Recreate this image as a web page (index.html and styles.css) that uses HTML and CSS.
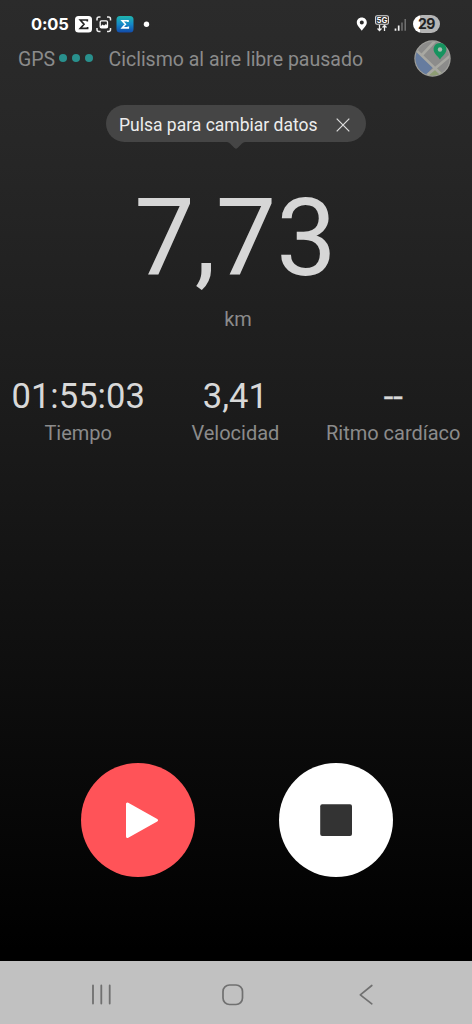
FILE: index.html
```html
<!DOCTYPE html>
<html lang="es">
<head>
<meta charset="utf-8">
<title>Ciclismo al aire libre</title>
<link rel="stylesheet" href="styles.css">
</head>
<body>
<main class="screen">
  <header class="status">
    <span class="clock">0:05</span>
    <svg class="status-apps" width="78" height="20" viewBox="0 0 78 20">
      <defs><linearGradient id="app" x1="0" y1="0" x2="0" y2="1"><stop offset="0" stop-color="#20b5ad"/><stop offset=".5" stop-color="#1589c8"/><stop offset="1" stop-color="#1249a8"/></linearGradient></defs>
      <rect x="0" y="2" width="17" height="16.500" rx="3.500" fill="#fff"/>
      <path d="M12.300 7.500V6H5.300l3.700 4.200-3.700 4.200h7.300V13" fill="none" stroke="#222" stroke-width="1.700"/>
      <path d="M22 6.500V5q0-2 2-2h1.500M32 3h1.500q2 0 2 2v1.500M35.500 14v1.500q0 2-2 2H32M25.500 17.500H24q-2 0-2-2V14" fill="none" stroke="#eee" stroke-width="1.500"/>
      <rect x="25.200" y="6.800" width="7.300" height="7" rx="1.300" fill="none" stroke="#fff" stroke-width="1.300"/>
      <path d="M25.500 12.500l2-2 1.500 1 2-1.500 1.500 2V14h-7z" fill="#fff"/>
      <rect x="41.500" y="2" width="17" height="16.500" rx="3.500" fill="url(#app)"/>
      <path d="M53 8V6.700h-5.800l3.200 3.600-3.200 3.600h6.100v-1.400" fill="none" stroke="#fff" stroke-width="1.600"/>
      <circle cx="71.500" cy="10.200" r="2.700" fill="#fff"/>
    </svg>
    <svg class="status-net" width="52" height="20" viewBox="0 0 52 20">
      <path fill-rule="evenodd" d="M5.800 3.500c-3 0-5 2.200-5 5 0 3.300 3.200 5.500 5 8.200 1.800-2.700 5-4.900 5-8.200 0-2.800-2-5-5-5zm0 3.100a2 2 0 1 1 0 4 2 2 0 0 1 0-4z" fill="#fff"/>
      <rect x="19.600" y="1.800" width="12.800" height="8.400" rx="1.500" fill="none" stroke="#ddd" stroke-width="1.100"/>
      <text x="26" y="8.700" text-anchor="middle" class="net-label">5G</text>
      <path d="M23.500 11v5.500m-2-2 2 2 2-2M28.500 17v-5.500m-2 2 2-2 2 2" fill="none" stroke="#eee" stroke-width="1.300"/>
      <path d="M39.500 14.500v2.200M42.700 11.500v5.200" stroke="#f2f2f2" stroke-width="1.700"/>
      <path d="M46 8.500v8.200M49.200 5v11.700" stroke="#777" stroke-width="1.400"/>
    </svg>
    <span class="battery">29</span>
  </header>
  <section class="activity">
    <span class="gps">GPS</span>
    <span class="signal"><i></i><i></i><i></i></span>
    <span class="state">Ciclismo al aire libre pausado</span>
    <svg class="map" width="37" height="37" viewBox="0 0 37 37">
      <defs><clipPath id="disc"><circle cx="18.500" cy="18.500" r="17"/></clipPath></defs>
      <circle cx="18.500" cy="18.500" r="18.200" fill="#a0a09c"/>
      <g clip-path="url(#disc)">
        <path d="M0 0h37v37H0z" fill="#8c8c8b"/>
        <path d="M0 9l19 18L8 40H0z" fill="#667c9f"/>
        <path d="M22 27l-10 10h20z" fill="#8e9d74"/>
        <path d="M-1 7l31 30M12 36l25-21M8 15L21 1" fill="none" stroke="#a8a8a2" stroke-width="2.600"/>
      </g>
      <path fill-rule="evenodd" d="M26 3c-3.800 0-6.400 2.900-6.400 6.300 0 4.100 3.800 6.500 6.400 10.200 2.600-3.700 6.400-6.100 6.400-10.200C32.400 5.900 29.800 3 26 3z" fill="#16935f"/>
      <circle cx="26" cy="9.500" r="2.200" fill="#a6bcb0"/>
    </svg>
  </section>
  <div class="hint">
    <span>Pulsa para cambiar datos</span>
    <svg width="14" height="14" viewBox="0 0 14 14"><path d="M.7.700l12.600 12.600M13.300.700L.7 13.300" stroke="#dedede" stroke-width="1.200"/></svg>
  </div>
  <svg class="hint-tip" width="18" height="7" viewBox="0 0 18 7"><path d="M0 0h18q-1.500 0-3 1.500L10.500 6q-1.500 1.500-3 0L3 1.500Q1.500 0 0 0z" fill="#454545"/></svg>
  <div class="distance">7,73</div>
  <div class="unit">km</div>
  <section class="stats">
    <div class="stat"><b>01:55:03</b><span>Tiempo</span></div>
    <div class="stat"><b>3,41</b><span>Velocidad</span></div>
    <div class="stat"><b class="empty">--</b><span>Ritmo cardíaco</span></div>
  </section>
  <section class="controls">
    <button class="round resume" aria-label="Reanudar"><svg width="114" height="114" viewBox="0 0 114 114"><path d="M46.500 41v32.500L75.500 57.300z" fill="#fff" stroke="#fff" stroke-width="3" stroke-linejoin="round"/></svg></button>
    <button class="round stop" aria-label="Detener"><svg width="114" height="114" viewBox="0 0 114 114"><rect x="41.200" y="41.200" width="31.800" height="31.800" rx="2" fill="#333"/></svg></button>
  </section>
  <nav class="nav">
    <svg width="22" height="22" viewBox="0 0 22 22"><path d="M2 1.500v18M10.300 1.500v18M18.700 1.500v18" stroke="#707070" stroke-width="1.800" stroke-linecap="round"/></svg>
    <svg class="home" width="22" height="22" viewBox="0 0 22 22"><rect x="1" y="1" width="19.500" height="19.500" rx="6.500" fill="none" stroke="#707070" stroke-width="1.700"/></svg>
    <svg width="16" height="22" viewBox="0 0 16 22"><path d="M13.800 1.500L2.300 10.800l11.500 9" fill="none" stroke="#707070" stroke-width="1.700" stroke-linecap="round" stroke-linejoin="round"/></svg>
  </nav>
</main>
</body>
</html>
```
FILE: styles.css
```css
* { box-sizing: border-box; }
body { margin: 0; }
svg { display: block; flex: none; }

.screen {
  display: flex;
  flex-direction: column;
  width: 472px;
  height: 1024px;
  overflow: hidden;
  background: linear-gradient(#2b2b2b 0, #272727 140px, #1c1c1c 400px, #000 950px);
  font-family: Roboto, sans-serif;
  color: #8b8b8b;
  white-space: nowrap;
}

.status { display: flex; height: 38px; padding: 14px 0 0 31px; }
.clock { width: 44px; font: 700 16.500px/20px Inter, sans-serif; letter-spacing: -.2px; color: #fff; }
.status-net { margin-left: 203px; }
.net-label { font: 700 7.800px Inter, sans-serif; fill: #fff; }
.battery {
  width: 27px;
  height: 18px;
  margin: 1px 0 0 5px;
  border-radius: 9px;
  background: linear-gradient(90deg, #fff 27%, #b5b5b5 27%);
  font: 700 14px/18px Inter, sans-serif;
  letter-spacing: -.4px;
  text-align: center;
  color: #222;
}

.activity { display: flex; align-items: center; height: 41px; padding: 0 21px 0 18px; font-size: 19.500px; }
.gps, .state { padding-top: 1px; }
.gps { width: 41px; }
.signal { display: flex; gap: 5px; width: 49.500px; margin-top: -1px; }
.signal i { width: 8px; height: 8px; border-radius: 50%; background: #29908d; }
.map { margin-left: auto; }

.hint {
  display: flex;
  align-items: center;
  justify-content: space-between;
  align-self: center;
  width: 260px;
  height: 37px;
  margin-top: 26px;
  padding: 2px 16px 0 13px;
  border-radius: 19px;
  background: #454545;
  font-size: 17.500px;
  color: #ededed;
}
.hint-tip { align-self: center; }

.distance { margin: 25px 0 0 -1px; font-size: 107.500px; line-height: 128px; text-align: center; color: #d6d6d6; }
.unit { margin: 5px 0 0 4px; font-size: 20px; line-height: 24px; text-align: center; }

.stats { display: flex; justify-content: space-between; margin-top: 45px; padding: 0 11.500px 0 11.500px; }
.stat { display: flex; flex-direction: column; align-items: center; }
.stat b { font-size: 34.600px; font-weight: 400; line-height: 41px; color: #d8d8d8; }
.stat .empty { -webkit-text-stroke: .4px #d8d8d8; }
.stat span { margin-top: 4px; font-size: 20px; line-height: 24px; }

.controls { display: flex; gap: 84px; margin: auto 0 84px 81px; }
.round { width: 114px; height: 114px; padding: 0; border: 0; border-radius: 50%; }
.resume { background: #ff5358; }
.stop { background: #fff; }

.nav {
  display: flex;
  flex: none;
  align-items: center;
  justify-content: space-between;
  height: 63px;
  padding: 4px 98px 0 91px;
  background: #c1c1c1;
}
.home { margin-right: 5px; }
```
